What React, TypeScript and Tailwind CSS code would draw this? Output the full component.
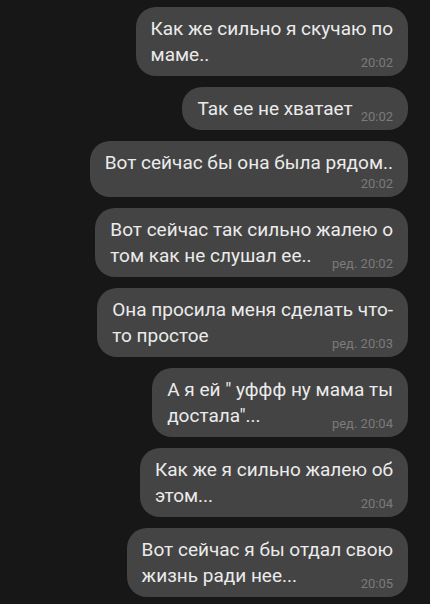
import React from "react";

type Msg = { lines: string[]; time: string; own?: boolean };

const msgs: Msg[] = [
  { lines: ["Как же сильно я скучаю по", "маме.."], time: "20:02" },
  { lines: ["Так ее не хватает"], time: "20:02" },
  { lines: ["Вот сейчас бы она была рядом.."], time: "20:02", own: true },
  { lines: ["Вот сейчас так сильно жалею о", "том как не слушал ее.."], time: "ред. 20:02" },
  { lines: ["Она просила меня сделать что-", "то простое"], time: "ред. 20:03" },
  { lines: ["А я ей \" уффф ну мама ты", "достала\"..."], time: "ред. 20:04" },
  { lines: ["Как же я сильно жалею об", "этом..."], time: "20:04" },
  { lines: ["Вот сейчас я бы отдал свою", "жизнь ради нее..."], time: "20:05" },
];

function Time({ t }: { t: string }) {
  return (
    <span className="text-[13px] leading-[16px] text-[#7b7b7b] whitespace-nowrap translate-y-[3px]">
      {t}
    </span>
  );
}

function Bubble({ m }: { m: Msg }) {
  const last = m.lines[m.lines.length - 1];
  const first = m.lines.slice(0, -1);
  return (
    <div className="self-end flex flex-col rounded-[20px] bg-[#444444] px-[15px] pt-[9px] pb-[8px] text-[19px] leading-[26px] text-[#ebebeb] whitespace-nowrap">
      {m.own ? (
        <>
          <div>{last}</div>
          <div className="flex justify-end -mt-[3px]">
            <Time t={m.time} />
          </div>
        </>
      ) : (
        <>
          {first.map((l, i) => (
            <div key={i}>{l}</div>
          ))}
          <div className="flex items-end justify-between gap-[8px]">
            <span>{last}</span>
            <Time t={m.time} />
          </div>
        </>
      )}
    </div>
  );
}

export default function App() {
  return (
    <div
      className="w-[430px] h-[604px] overflow-hidden bg-[#171717] flex flex-col gap-[11px] pt-[7px] pr-[22px]"
      style={{ fontFamily: "Roboto, 'Noto Sans', sans-serif" }}
    >
      {msgs.map((m, i) => (
        <Bubble key={i} m={m} />
      ))}
    </div>
  );
}
